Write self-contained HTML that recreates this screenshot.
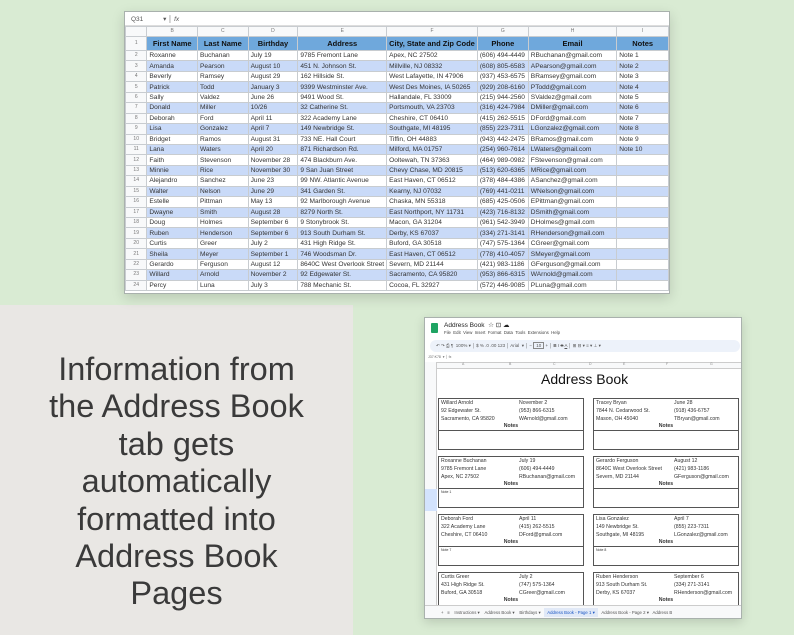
<!DOCTYPE html>
<html><head><meta charset="utf-8"><style>
*{margin:0;padding:0;box-sizing:border-box}
body{width:794px;height:635px;position:relative;overflow:hidden;background:#d9ebd3;font-family:"Liberation Sans",Arial,sans-serif}
.gray{position:absolute;left:0;top:305px;width:353px;height:330px;background:#e9e7e4}
.big{position:absolute;left:0;top:351px;width:353px;text-align:center;font-size:32.5px;line-height:37.4px;color:#3a3a3a}
.s1{position:absolute;left:124px;top:11px;width:546px;height:283px;background:#fff;border:1px solid #a9b1ad;box-shadow:0 4px 12px rgba(0,0,0,.15)}
.s1 .bar{position:absolute;left:0;top:0;width:100%;height:14px;font-size:6.5px;color:#555;padding:3px 6px;border-bottom:1px solid #ddd}
.s1 table{position:absolute;left:0;top:14px;border-collapse:collapse;table-layout:fixed;font-size:6.6px;color:#333}
.s1 td{border:1px solid #c8ccd0;height:10.45px;padding:0 2px;white-space:nowrap;overflow:hidden;line-height:9px}
.s1 td:first-child{text-align:center;color:#777;font-size:5px;background:#f8f9fa}
.s1 tr.ch td{height:10px;text-align:center;color:#777;font-size:5px;background:#f8f9fa}
.s1 tr.hd td{height:14px;background:#6fa8dc;font-weight:bold;text-align:center;color:#111;font-size:7.5px;border-color:#c8ccd0}
.s1 tr.hd td:first-child{background:#f8f9fa;font-weight:normal;color:#777;font-size:5px}
.s1 tr.b td{background:#c9daf8}
.s1 tr.b td:first-child{background:#f8f9fa}
.s2{position:absolute;left:424px;top:317px;width:318px;height:302px;background:#fff;border:1px solid #a9b1ad;box-shadow:0 3px 10px rgba(0,0,0,.15);overflow:hidden;font-size:5px;color:#333}
.a{position:absolute;white-space:nowrap}
.card{position:absolute;border:1px solid #555;width:146px;height:52px}
.card .l{position:absolute;font-size:5.2px;white-space:nowrap}
.card .n{position:absolute;left:0;width:100%;top:24px;text-align:center;font-weight:bold;font-size:5.2px}
.card .ln{position:absolute;left:0;width:100%;top:31px;border-top:1px solid #555}
</style></head><body>
<div class="gray"></div>
<div class="big">Information from<br>the Address Book<br>tab gets<br>automatically<br>formatted into<br>Address Book<br>Pages</div>

<div class="s1">
<div class="bar">Q31 &nbsp;&nbsp;&nbsp;&nbsp;&nbsp;&nbsp;&nbsp;&nbsp;&nbsp;&nbsp;▾ │ <i>fx</i></div>
<table>
<colgroup><col style="width:22px"><col style="width:51px"><col style="width:51px"><col style="width:50px"><col style="width:88px"><col style="width:89px"><col style="width:51px"><col style="width:89px"><col style="width:53px"></colgroup>
<tr class="ch"><td></td><td>B</td><td>C</td><td>D</td><td>E</td><td>F</td><td>G</td><td>H</td><td>I</td></tr>
<tr class="hd"><td>1</td><td>First Name</td><td>Last Name</td><td>Birthday</td><td>Address</td><td>City, State and Zip Code</td><td>Phone</td><td>Email</td><td>Notes</td></tr>
<tr><td>2</td><td>Roxanne</td><td>Buchanan</td><td>July 19</td><td>9785 Fremont Lane</td><td>Apex, NC 27502</td><td>(606) 494-4449</td><td>RBuchanan@gmail.com</td><td>Note 1</td></tr>
<tr class="b"><td>3</td><td>Amanda</td><td>Pearson</td><td>August 10</td><td>451 N. Johnson St.</td><td>Millville, NJ 08332</td><td>(608) 805-6583</td><td>APearson@gmail.com</td><td>Note 2</td></tr>
<tr><td>4</td><td>Beverly</td><td>Ramsey</td><td>August 29</td><td>162 Hillside St.</td><td>West Lafayette, IN 47906</td><td>(937) 453-6575</td><td>BRamsey@gmail.com</td><td>Note 3</td></tr>
<tr class="b"><td>5</td><td>Patrick</td><td>Todd</td><td>January 3</td><td>9399 Westminster Ave.</td><td>West Des Moines, IA 50265</td><td>(929) 208-6160</td><td>PTodd@gmail.com</td><td>Note 4</td></tr>
<tr><td>6</td><td>Sally</td><td>Valdez</td><td>June 26</td><td>9491 Wood St.</td><td>Hallandale, FL 33009</td><td>(215) 944-2560</td><td>SValdez@gmail.com</td><td>Note 5</td></tr>
<tr class="b"><td>7</td><td>Donald</td><td>Miller</td><td>10/26</td><td>32 Catherine St.</td><td>Portsmouth, VA 23703</td><td>(316) 424-7984</td><td>DMiller@gmail.com</td><td>Note 6</td></tr>
<tr><td>8</td><td>Deborah</td><td>Ford</td><td>April 11</td><td>322 Academy Lane</td><td>Cheshire, CT 06410</td><td>(415) 262-5515</td><td>DFord@gmail.com</td><td>Note 7</td></tr>
<tr class="b"><td>9</td><td>Lisa</td><td>Gonzalez</td><td>April 7</td><td>149 Newbridge St.</td><td>Southgate, MI 48195</td><td>(855) 223-7311</td><td>LGonzalez@gmail.com</td><td>Note 8</td></tr>
<tr><td>10</td><td>Bridget</td><td>Ramos</td><td>August 31</td><td>733 NE. Hall Court</td><td>Tiffin, OH 44883</td><td>(943) 442-2475</td><td>BRamos@gmail.com</td><td>Note 9</td></tr>
<tr class="b"><td>11</td><td>Lana</td><td>Waters</td><td>April 20</td><td>871 Richardson Rd.</td><td>Milford, MA 01757</td><td>(254) 960-7614</td><td>LWaters@gmail.com</td><td>Note 10</td></tr>
<tr><td>12</td><td>Faith</td><td>Stevenson</td><td>November 28</td><td>474 Blackburn Ave.</td><td>Ooltewah, TN 37363</td><td>(464) 989-0982</td><td>FStevenson@gmail.com</td><td></td></tr>
<tr class="b"><td>13</td><td>Minnie</td><td>Rice</td><td>November 30</td><td>9 San Juan Street</td><td>Chevy Chase, MD 20815</td><td>(513) 620-6365</td><td>MRice@gmail.com</td><td></td></tr>
<tr><td>14</td><td>Alejandro</td><td>Sanchez</td><td>June 23</td><td>99 NW. Atlantic Avenue</td><td>East Haven, CT 06512</td><td>(378) 484-4386</td><td>ASanchez@gmail.com</td><td></td></tr>
<tr class="b"><td>15</td><td>Walter</td><td>Nelson</td><td>June 29</td><td>341 Garden St.</td><td>Kearny, NJ 07032</td><td>(769) 441-0211</td><td>WNelson@gmail.com</td><td></td></tr>
<tr><td>16</td><td>Estelle</td><td>Pittman</td><td>May 13</td><td>92 Marlborough Avenue</td><td>Chaska, MN 55318</td><td>(685) 425-0506</td><td>EPittman@gmail.com</td><td></td></tr>
<tr class="b"><td>17</td><td>Dwayne</td><td>Smith</td><td>August 28</td><td>8279 North St.</td><td>East Northport, NY 11731</td><td>(423) 716-8132</td><td>DSmith@gmail.com</td><td></td></tr>
<tr><td>18</td><td>Doug</td><td>Holmes</td><td>September 6</td><td>9 Stonybrook St.</td><td>Macon, GA 31204</td><td>(961) 542-3949</td><td>DHolmes@gmail.com</td><td></td></tr>
<tr class="b"><td>19</td><td>Ruben</td><td>Henderson</td><td>September 6</td><td>913 South Durham St.</td><td>Derby, KS 67037</td><td>(334) 271-3141</td><td>RHenderson@gmail.com</td><td></td></tr>
<tr><td>20</td><td>Curtis</td><td>Greer</td><td>July 2</td><td>431 High Ridge St.</td><td>Buford, GA 30518</td><td>(747) 575-1364</td><td>CGreer@gmail.com</td><td></td></tr>
<tr class="b"><td>21</td><td>Sheila</td><td>Meyer</td><td>September 1</td><td>746 Woodsman Dr.</td><td>East Haven, CT 06512</td><td>(778) 410-4057</td><td>SMeyer@gmail.com</td><td></td></tr>
<tr><td>22</td><td>Gerardo</td><td>Ferguson</td><td>August 12</td><td>8640C West Overlook Street</td><td>Severn, MD 21144</td><td>(421) 983-1186</td><td>GFerguson@gmail.com</td><td></td></tr>
<tr class="b"><td>23</td><td>Willard</td><td>Arnold</td><td>November 2</td><td>92 Edgewater St.</td><td>Sacramento, CA 95820</td><td>(953) 866-6315</td><td>WArnold@gmail.com</td><td></td></tr>
<tr><td>24</td><td>Percy</td><td>Luna</td><td>July 3</td><td>788 Mechanic St.</td><td>Cocoa, FL 32927</td><td>(572) 446-9085</td><td>PLuna@gmail.com</td><td></td></tr>
</table>
</div>

<div class="s2">
<div class="a" style="left:6px;top:5px;width:7px;height:10px;background:#1fa463;border-radius:1px"></div>
<div class="a" style="left:19px;top:3px;font-size:6.5px;color:#222">Address Book &nbsp;☆ ⊡ ☁</div>
<div class="a" style="left:19px;top:12px;font-size:4.3px;color:#444">File &nbsp;Edit &nbsp;View &nbsp;Insert &nbsp;Format &nbsp;Data &nbsp;Tools &nbsp;Extensions &nbsp;Help</div>
<div class="a" style="left:5px;top:22px;width:310px;height:12px;background:#edf2fa;border-radius:6px;font-size:4.5px;color:#555;padding:3px 6px">↶ ↷ ⎙ ¶ &nbsp;100% ▾ │ $ % .0 .00 123 │ Arial &nbsp;▾ │ − <span style="border:1px solid #888;padding:0 2px">10</span> + │ <b>B</b> <i>I</i> <s>S</s> <u>A</u> │ ⊞ ⊟ ▾ ≡ ▾ ⊥ ▾</div>
<div class="a" style="left:3px;top:37px;font-size:3.5px;color:#666">J37:K78 &nbsp;▾ │ fx</div>
<div class="a" style="left:0;top:44px;width:318px;height:7px;background:#f8f9fa;border-top:1px solid #ccc;border-bottom:1px solid #ccc"></div>
<div class="a" style="left:0;top:44px;width:12px;height:258px;background:#f8f9fa;border-right:1px solid #ccc"></div>
<div class="a" style="left:0;top:171px;width:12px;height:22px;background:#d3e3fd"></div>
<div class="a" style="left:37px;top:44px;font-size:3.5px;color:#888">A</div>
<div class="a" style="left:84px;top:44px;font-size:3.5px;color:#888">B</div>
<div class="a" style="left:128px;top:44px;font-size:3.5px;color:#888">C</div>
<div class="a" style="left:164px;top:44px;font-size:3.5px;color:#888">D</div>
<div class="a" style="left:198px;top:44px;font-size:3.5px;color:#888">E</div>
<div class="a" style="left:241px;top:44px;font-size:3.5px;color:#888">F</div>
<div class="a" style="left:285px;top:44px;font-size:3.5px;color:#888">G</div>
<div class="a" style="left:116px;top:53px;font-size:14px;color:#111">Address Book</div>

<div class="card" style="left:13px;top:80px"><div class="l" style="left:2px;top:1px">Willard Arnold</div><div class="l" style="left:80px;top:1px">November 2</div><div class="l" style="left:2px;top:9px">92 Edgewater St.</div><div class="l" style="left:80px;top:9px">(953) 866-6315</div><div class="l" style="left:2px;top:17px">Sacramento, CA 95820</div><div class="l" style="left:80px;top:17px">WArnold@gmail.com</div><div class="n">Notes</div><div class="ln"></div></div>
<div class="card" style="left:168px;top:80px"><div class="l" style="left:2px;top:1px">Tracey Bryan</div><div class="l" style="left:80px;top:1px">June 28</div><div class="l" style="left:2px;top:9px">7844 N. Cedarwood St.</div><div class="l" style="left:80px;top:9px">(918) 436-6757</div><div class="l" style="left:2px;top:17px">Mason, OH 45040</div><div class="l" style="left:80px;top:17px">TBryan@gmail.com</div><div class="n">Notes</div><div class="ln"></div></div>
<div class="card" style="left:13px;top:138px"><div class="l" style="left:2px;top:1px">Roxanne Buchanan</div><div class="l" style="left:80px;top:1px">July 19</div><div class="l" style="left:2px;top:9px">9785 Fremont Lane</div><div class="l" style="left:80px;top:9px">(606) 494-4449</div><div class="l" style="left:2px;top:17px">Apex, NC 27502</div><div class="l" style="left:80px;top:17px">RBuchanan@gmail.com</div><div class="n">Notes</div><div class="ln"></div><div class="l" style="left:2px;top:33px;font-size:3.5px">Note 1</div></div>
<div class="card" style="left:168px;top:138px"><div class="l" style="left:2px;top:1px">Gerardo Ferguson</div><div class="l" style="left:80px;top:1px">August 12</div><div class="l" style="left:2px;top:9px">8640C West Overlook Street</div><div class="l" style="left:80px;top:9px">(421) 983-1186</div><div class="l" style="left:2px;top:17px">Severn, MD 21144</div><div class="l" style="left:80px;top:17px">GFerguson@gmail.com</div><div class="n">Notes</div><div class="ln"></div></div>
<div class="card" style="left:13px;top:196px"><div class="l" style="left:2px;top:1px">Deborah Ford</div><div class="l" style="left:80px;top:1px">April 11</div><div class="l" style="left:2px;top:9px">322 Academy Lane</div><div class="l" style="left:80px;top:9px">(415) 262-5515</div><div class="l" style="left:2px;top:17px">Cheshire, CT 06410</div><div class="l" style="left:80px;top:17px">DFord@gmail.com</div><div class="n">Notes</div><div class="ln"></div><div class="l" style="left:2px;top:33px;font-size:3.5px">Note 7</div></div>
<div class="card" style="left:168px;top:196px"><div class="l" style="left:2px;top:1px">Lisa Gonzalez</div><div class="l" style="left:80px;top:1px">April 7</div><div class="l" style="left:2px;top:9px">149 Newbridge St.</div><div class="l" style="left:80px;top:9px">(855) 223-7311</div><div class="l" style="left:2px;top:17px">Southgate, MI 48195</div><div class="l" style="left:80px;top:17px">LGonzalez@gmail.com</div><div class="n">Notes</div><div class="ln"></div><div class="l" style="left:2px;top:33px;font-size:3.5px">Note 8</div></div>
<div class="card" style="left:13px;top:254px"><div class="l" style="left:2px;top:1px">Curtis Greer</div><div class="l" style="left:80px;top:1px">July 2</div><div class="l" style="left:2px;top:9px">431 High Ridge St.</div><div class="l" style="left:80px;top:9px">(747) 575-1364</div><div class="l" style="left:2px;top:17px">Buford, GA 30518</div><div class="l" style="left:80px;top:17px">CGreer@gmail.com</div><div class="n">Notes</div></div>
<div class="card" style="left:168px;top:254px"><div class="l" style="left:2px;top:1px">Ruben Henderson</div><div class="l" style="left:80px;top:1px">September 6</div><div class="l" style="left:2px;top:9px">913 South Durham St.</div><div class="l" style="left:80px;top:9px">(334) 271-3141</div><div class="l" style="left:2px;top:17px">Derby, KS 67037</div><div class="l" style="left:80px;top:17px">RHenderson@gmail.com</div><div class="n">Notes</div></div>

<div class="a" style="left:0;top:287px;width:318px;height:15px;background:#f8f9fa;border-top:1px solid #ccc"></div>
<div class="a" style="left:16px;top:292px;font-size:4.3px;color:#555">+ &nbsp;&nbsp;≡ &nbsp;&nbsp;&nbsp;Instructions ▾ &nbsp;&nbsp;&nbsp;Address Book ▾ &nbsp;&nbsp;&nbsp;Birthdays ▾ &nbsp;&nbsp;<span style="background:#e1e9f7;color:#1a56c4;padding:2px 3px">Address Book - Page 1 ▾</span> &nbsp;&nbsp;Address Book - Page 2 ▾ &nbsp;&nbsp;Address B</div>
</div>
</body></html>
